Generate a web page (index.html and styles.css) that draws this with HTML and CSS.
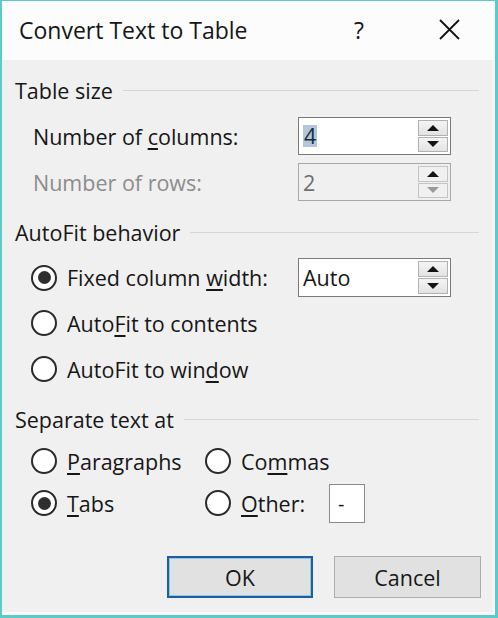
FILE: index.html
```html
<!DOCTYPE html>
<html>
<head>
<meta charset="utf-8">
<link rel="stylesheet" href="styles.css">
</head>
<body>
<div class="window">
  <div class="titlebar">
    <div class="title">Convert Text to Table</div>
    <div class="help">?</div>
    <div class="close">
      <svg width="21" height="21" viewBox="0 0 21 21"><path d="M1 1 L20 20 M20 1 L1 20" stroke="#111" stroke-width="1.8" fill="none"/></svg>
    </div>
  </div>
  <div class="content">
    <div class="group-head g1"><span>Table size</span></div>
    <div class="field f1">
      <div class="label">Number of <u>c</u>olumns:</div>
      <div class="spin">
        <div class="value"><span class="sel">4</span></div>
        <div class="spin-btns">
          <div class="sbtn"><span class="tri up"></span></div>
          <div class="sbtn"><span class="tri down"></span></div>
        </div>
      </div>
    </div>
    <div class="field f2 disabled">
      <div class="label">Number of rows:</div>
      <div class="spin">
        <div class="value">2</div>
        <div class="spin-btns">
          <div class="sbtn"><span class="tri up"></span></div>
          <div class="sbtn"><span class="tri down light"></span></div>
        </div>
      </div>
    </div>

    <div class="group-head g2"><span>AutoFit behavior</span></div>
    <div class="field r1">
      <div class="radio label"><span class="circle checked"></span><span>Fixed column <u>w</u>idth:</span></div>
      <div class="spin">
        <div class="value">Auto</div>
        <div class="spin-btns">
          <div class="sbtn"><span class="tri up"></span></div>
          <div class="sbtn"><span class="tri down"></span></div>
        </div>
      </div>
    </div>
    <div class="radio row"><span class="circle"></span><span>Auto<u>F</u>it to contents</span></div>
    <div class="radio row"><span class="circle"></span><span>AutoFit to win<u>d</u>ow</span></div>

    <div class="group-head g3"><span>Separate text at</span></div>
    <div class="sepgrid">
      <div class="radio"><span class="circle"></span><span><u>P</u>aragraphs</span></div>
      <div class="radio"><span class="circle"></span><span>Co<u>m</u>mas</span></div>
      <div class="radio"><span class="circle checked"></span><span><u>T</u>abs</span></div>
      <div class="radio"><span class="circle"></span><span><u>O</u>ther:</span><span class="otherbox">-</span></div>
    </div>

    <div class="buttons">
      <div class="btn default">OK</div>
      <div class="btn">Cancel</div>
    </div>
  </div>
</div>
</body>
</html>
```

FILE: styles.css
```css
html, body {
  margin: 0;
  padding: 0;
  height: 100%;
}
body {
  background: #5ccac8;
  font-family: "Open Sans", "Noto Sans", sans-serif;
  color: #161616;
  overflow: hidden;
}
.window {
  margin: 1px 3px 3px 2px;
  height: 614px;
  box-sizing: border-box;
  background: #f0f0f0;
  border-right: 2px solid #f9f9f9;
  border-bottom: 3px solid #f9f9f9;
  display: flex;
  flex-direction: column;
}
.titlebar {
  height: 59px;
  flex: 0 0 59px;
  background: #fcfcfc;
  display: flex;
  align-items: center;
  padding-left: 17px;
}
.title {
  flex: 1;
  font-size: 23px;
  padding-bottom: 2px;
}
.help {
  font-size: 23px;
  width: 12px;
  margin-right: 73px;
  padding-bottom: 2px;
}
.close {
  width: 21px;
  height: 21px;
  margin-right: 33px;
  margin-bottom: 2px;
}
.close svg { display: block; }

.content {
  flex: 1;
  padding-top: 15px;
  font-size: 21.5px;
}
u { text-decoration-thickness: 1.5px; text-underline-offset: 3px; }

.group-head {
  display: flex;
  align-items: center;
  height: 30px;
  padding-left: 13px;
  padding-right: 14px;
}
.group-head::after {
  content: "";
  flex: 1;
  height: 1px;
  background: #d6d6d6;
  margin-left: 10px;
}
.g2 { margin-top: 16px; }
.g3 { margin-top: 15px; }

.field {
  display: flex;
  align-items: center;
  height: 38px;
  padding-left: 31px;
}
.f1 { margin-top: 12px; }
.f2 { margin-top: 8px; }
.field .label {
  flex: 0 0 265px;
}
.field.r1 {
  margin-top: 11px;
  height: 39px;
  padding-left: 29px;
}
.field.r1 .label { flex: 0 0 267px; }
.disabled .label { color: #8c8c8c; }

.spin {
  width: 153px;
  height: 100%;
  box-sizing: border-box;
  border: 1px solid #7a7a7a;
  background: #fff;
  display: flex;
  padding: 2px 2px 2px 4px;
}
.disabled .spin {
  border-color: #a8a8a8;
  background: #f0f0f0;
}
.value {
  flex: 1;
  display: flex;
  align-items: center;
  font-size: 21.5px;
}
.disabled .value { color: #6e6e6e; }
.sel {
  background: #b3c7dc;
  color: #1b2a3a;
  padding: 0 1px;
  line-height: 22px;
}
.spin-btns {
  width: 30px;
  display: flex;
  flex-direction: column;
  gap: 1px;
}
.sbtn {
  flex: 1;
  box-sizing: border-box;
  border: 1px solid #b1b1b1;
  background: linear-gradient(#f4f4f4, #e3e3e3);
  display: flex;
  align-items: center;
  justify-content: center;
}
.disabled .sbtn { background: #f0f0f0; border-color: #c4c4c4; }
.tri {
  width: 0;
  height: 0;
  border-left: 6px solid transparent;
  border-right: 6px solid transparent;
}
.tri.up { border-bottom: 6px solid #141414; }
.tri.down { border-top: 6px solid #141414; }
.tri.down.light { border-top-color: #9a9a9a; }

.radio {
  display: flex;
  align-items: center;
}
.radio.row {
  height: 40px;
  padding-left: 29px;
  margin-top: 6px;
}
.circle {
  flex: 0 0 auto;
  width: 26px;
  height: 26px;
  box-sizing: border-box;
  border: 2px solid #2a2a2a;
  border-radius: 50%;
  background: #fff;
  margin-right: 10px;
  display: flex;
  align-items: center;
  justify-content: center;
}
.circle.checked::after {
  content: "";
  width: 13px;
  height: 13px;
  border-radius: 50%;
  background: #2e2e2e;
}

.sepgrid {
  margin-top: 7px;
  padding-left: 29px;
  display: grid;
  grid-template-columns: 174px auto;
  grid-auto-rows: 40px;
  row-gap: 2px;
}
.otherbox {
  width: 36px;
  height: 39px;
  box-sizing: border-box;
  border: 1px solid #8a8a8a;
  background: #fff;
  margin-left: 24px;
  display: flex;
  align-items: center;
  padding-left: 8px;
  font-size: 20px;
}

.buttons {
  margin-top: 33px;
  display: flex;
  justify-content: flex-end;
  gap: 21px;
  padding-right: 12px;
}
.btn {
  width: 147px;
  height: 42px;
  box-sizing: border-box;
  border: 1px solid #adadad;
  background: #e1e1e1;
  display: flex;
  align-items: center;
  justify-content: center;
  font-size: 21.5px;
}
.btn.default {
  width: 146px;
  border: 2px solid #1d5f9c;
  box-shadow: inset 0 0 0 1px #8fc6ec;
}
```
